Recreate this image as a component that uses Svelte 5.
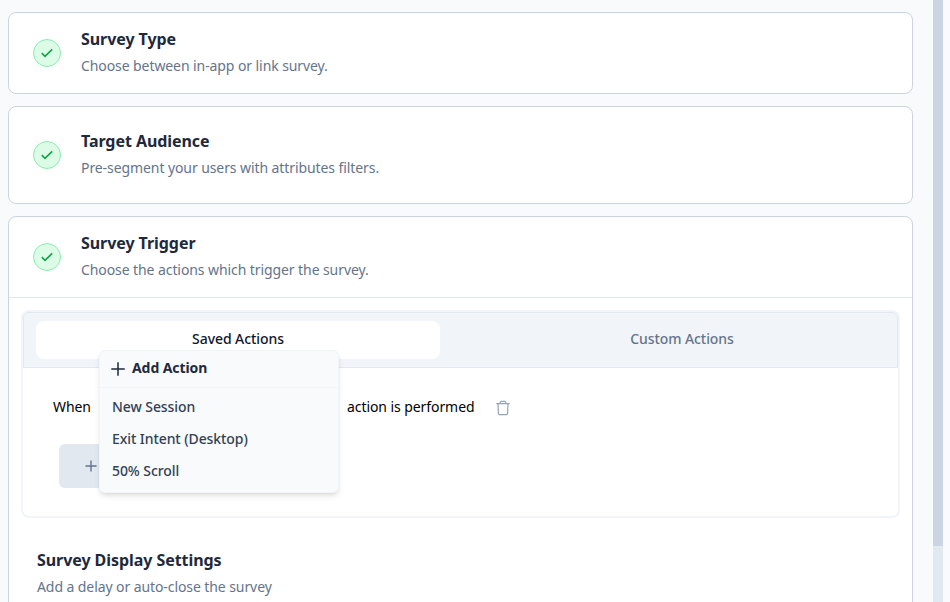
<script>
  const actions = ['New Session', 'Exit Intent (Desktop)', '50% Scroll'];
</script>

{#snippet header(title, text)}
  <div class="head">
    <span class="check">
      <svg width="14" height="14" viewBox="0 0 14 14" fill="none" stroke="currentColor" stroke-width="1.7"><path d="M1.8 7.2 5 10.3 12.2 3.4" /></svg>
    </span>
    <div>
      <h2>{title}</h2>
      <p>{text}</p>
    </div>
  </div>
{/snippet}

<div class="page">
  <main>
    <section class="card first">{@render header('Survey Type', 'Choose between in-app or link survey.')}</section>
    <section class="card second">{@render header('Target Audience', 'Pre-segment your users with attributes filters.')}</section>
    <section class="card third">
      {@render header('Survey Trigger', 'Choose the actions which trigger the survey.')}
      <hr />
      <div class="panel">
        <nav>
          <button class="tab active">Saved Actions</button>
          <button class="tab">Custom Actions</button>
        </nav>
        <div class="body">
          <div class="row">
            <span class="when">When</span>
            <div class="select">
              <div class="menu">
                <button class="add">
                  <svg width="14" height="14" viewBox="0 0 14 14" fill="none" stroke="currentColor" stroke-width="1.5"><path d="M7 0.3v13.4M0.3 7h13.4" /></svg>
                  Add Action
                </button>
                <ul>
                  {#each actions as action}
                    <li>{action}</li>
                  {/each}
                </ul>
              </div>
            </div>
            <span class="performed">action is performed</span>
            <svg class="trash" width="14" height="16" viewBox="0 0 14 16" fill="none" stroke="currentColor" stroke-width="1.2"><path d="M0.3 3.6h13.4M4.2 3.4V2.6q0-1.3 1.3-1.3h3q1.3 0 1.3 1.3v0.8M2 3.8l0.4 9.5q0.1 1.3 1.4 1.3h6.4q1.3 0 1.4-1.3L12 3.8" /></svg>
          </div>
          <button class="condition" aria-label="Add condition">
            <svg width="12" height="12" viewBox="0 0 12 12" fill="none" stroke="currentColor" stroke-width="1.4"><path d="M6 0.5v11M0.5 6h11" /></svg>
          </button>
        </div>
      </div>
      <div class="display">
        <h2>Survey Display Settings</h2>
        <p>Add a delay or auto-close the survey</p>
      </div>
    </section>
  </main>
  <aside><div class="thumb"></div></aside>
</div>

<style>
  :global(body) { margin: 0; overflow: hidden; }
  .page {
    display: flex;
    box-sizing: border-box;
    width: 950px;
    height: 602px;
    padding: 0 7px 0 8px;
    overflow: hidden;
    background: #f8fafc;
    color: #0f172a;
    font: 14px/20px "Noto Sans", sans-serif;
    letter-spacing: -0.075px;
  }
  main {
    display: flex;
    flex-direction: column;
    gap: 12px;
    width: 905px;
    padding-top: 12px;
  }
  aside { width: 10px; margin-left: 20px; background: #e2e8f0; }
  .thumb { height: 546px; background: #cbd5e1; }
  .card {
    flex: none;
    box-sizing: border-box;
    border: 1px solid #cbd5e1;
    border-radius: 8px;
    background: #fff;
  }
  .first { height: 82px; }
  .second { height: 98px; padding-top: 8px; }
  .third { height: 500px; }
  .head { display: flex; align-items: center; height: 80px; padding-left: 24px; }
  .check {
    display: flex;
    align-items: center;
    justify-content: center;
    box-sizing: border-box;
    width: 28px;
    height: 28px;
    margin-right: 20px;
    border: 1px solid #86efac;
    border-radius: 50%;
    background: #dcfce7;
    color: #16a34a;
  }
  h2 { margin: 0; color: #1e293b; font-size: 16px; font-weight: 700; line-height: 24px; letter-spacing: -0.06px; }
  p { margin: 4px 0 0; color: #64748b; letter-spacing: -0.085px; }
  .head h2 { margin-top: -3px; }
  .head p { margin-top: 5px; }
  hr { height: 1px; margin: 0; border: 0; background: #e2e8f0; }
  .panel {
    box-sizing: border-box;
    height: 208px;
    margin: 12px 12px 0;
    border: 2px solid #f1f5f9;
    border-radius: 8px;
  }
  nav {
    display: flex;
    box-sizing: border-box;
    gap: 40px;
    align-items: center;
    height: 56px;
    padding: 0 12px;
    border: 1px solid #e2e8f0;
    border-radius: 6px 6px 0 0;
    background: #f1f5f9;
  }
  button { padding: 0; border: 0; background: none; font: inherit; letter-spacing: inherit; }
  .tab { width: 404px; height: 38px; padding-bottom: 2px; border-radius: 8px; color: #64748b; font-weight: 500; }
  .active { background: #fff; color: #0f172a; }
  .body { padding: 24px 0 0 30px; }
  .row { display: flex; align-items: center; height: 30px; color: #000; }
  .when { width: 46px; }
  .select { position: relative; width: 240px; height: 30px; }
  .performed { width: 128px; margin-left: 8px; white-space: nowrap; }
  .trash { margin: 2px 0 0 21px; color: #94a3b8; }
  .menu {
    position: absolute;
    top: -42px;
    left: 0;
    z-index: 2;
    box-sizing: border-box;
    width: 240px;
    height: 143px;
    border: 1px solid #f1f5f9;
    border-radius: 6px;
    background: #f8fafc;
    box-shadow: 0 4px 6px -1px #0000001a, 0 2px 4px -2px #0000001a;
    color: #334155;
    font-weight: 500;
  }
  .add {
    display: flex;
    align-items: center;
    box-sizing: border-box;
    width: 100%;
    height: 37px;
    gap: 7px;
    padding: 0 0 2px 11px;
    border-bottom: 1px solid #f1f5f9;
    color: #1e293b;
    font-weight: 700;
  }
  .add svg { margin-top: 2px; }
  ul { margin: 0; padding: 3px 0 0 12px; list-style: none; }
  li { height: 32px; line-height: 32px; }
  .condition {
    display: flex;
    align-items: center;
    width: 168px;
    height: 44px;
    margin: 22px 0 0 6px;
    padding-left: 26px;
    border-radius: 6px;
    background: #e2e8f0;
    color: #64748b;
  }
  .display { padding: 30px 0 0 28px; }
  .display p { margin-top: 5px; }
</style>
